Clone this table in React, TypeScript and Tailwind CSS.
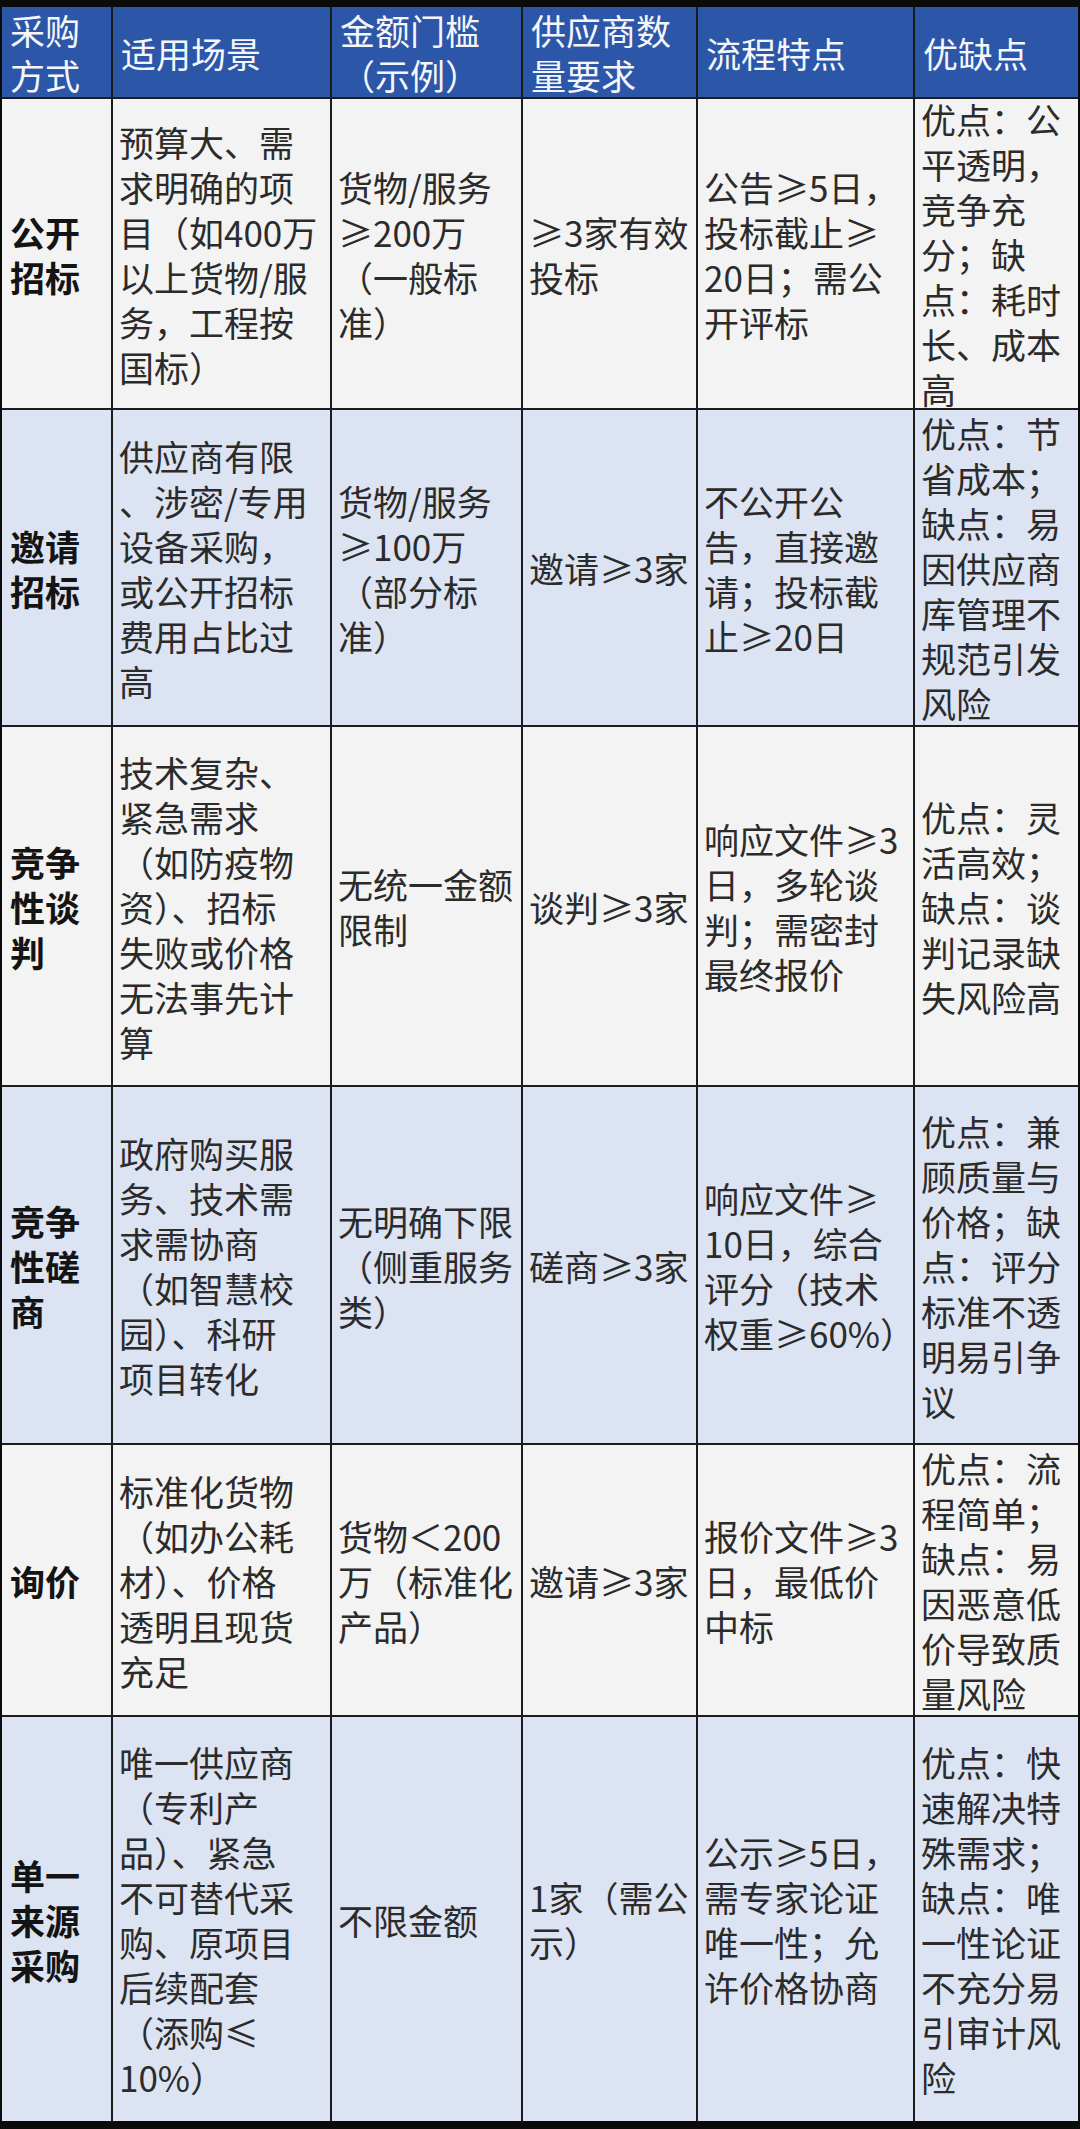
const headers = [['采购', '方式'], ['适用场景'], ['金额门槛', '（示例）'], ['供应商数', '量要求'], ['流程特点'], ['优缺点']];

const rows = [
  {
    h: 'h-[309px]',
    bg: 'bg-[#f3f3f3]',
    cells: [
      ['公开', '招标'],
      ['预算大、需', '求明确的项', '目（如400万', '以上货物/服', '务，工程按', '国标）'],
      ['货物/服务', '≥200万', '（一般标', '准）'],
      ['≥3家有效', '投标'],
      ['公告≥5日，', '投标截止≥', '20日；需公', '开评标'],
      ['优点：公', '平透明，', '竞争充', '分；缺', '点：耗时', '长、成本', '高']
    ]
  },
  {
    h: 'h-[315px]',
    bg: 'bg-[#dce3f2]',
    cells: [
      ['邀请', '招标'],
      ['供应商有限', '、涉密/专用', '设备采购，', '或公开招标', '费用占比过', '高'],
      ['货物/服务', '≥100万', '（部分标', '准）'],
      ['邀请≥3家'],
      ['不公开公', '告，直接邀', '请；投标截', '止≥20日'],
      ['优点：节', '省成本；', '缺点：易', '因供应商', '库管理不', '规范引发', '风险']
    ]
  },
  {
    h: 'h-[358px]',
    bg: 'bg-[#f3f3f3]',
    cells: [
      ['竞争', '性谈', '判'],
      ['技术复杂、', '紧急需求', '（如防疫物', '资）、招标', '失败或价格', '无法事先计', '算'],
      ['无统一金额', '限制'],
      ['谈判≥3家'],
      ['响应文件≥3', '日，多轮谈', '判；需密封', '最终报价'],
      ['优点：灵', '活高效；', '缺点：谈', '判记录缺', '失风险高']
    ]
  },
  {
    h: 'h-[356px]',
    bg: 'bg-[#dce3f2]',
    cells: [
      ['竞争', '性磋', '商'],
      ['政府购买服', '务、技术需', '求需协商', '（如智慧校', '园）、科研', '项目转化'],
      ['无明确下限', '（侧重服务', '类）'],
      ['磋商≥3家'],
      ['响应文件≥', '10日，综合', '评分（技术', '权重≥60%）'],
      ['优点：兼', '顾质量与', '价格；缺', '点：评分', '标准不透', '明易引争', '议']
    ]
  },
  {
    h: 'h-[270px]',
    bg: 'bg-[#f3f3f3]',
    cells: [
      ['询价'],
      ['标准化货物', '（如办公耗', '材）、价格', '透明且现货', '充足'],
      ['货物＜200', '万（标准化', '产品）'],
      ['邀请≥3家'],
      ['报价文件≥3', '日，最低价', '中标'],
      ['优点：流', '程简单；', '缺点：易', '因恶意低', '价导致质', '量风险']
    ]
  },
  {
    h: 'h-[404px]',
    bg: 'bg-[#dce3f2]',
    cells: [
      ['单一', '来源', '采购'],
      ['唯一供应商', '（专利产', '品）、紧急', '不可替代采', '购、原项目', '后续配套', '（添购≤', '10%）'],
      ['不限金额'],
      ['1家（需公', '示）'],
      ['公示≥5日，', '需专家论证', '唯一性；允', '许价格协商'],
      ['优点：快', '速解决特', '殊需求；', '缺点：唯', '一性论证', '不充分易', '引审计风', '险']
    ]
  }
];

// each cell is one text block; lines are kept as in the original picture
function Lines({ lines }: { lines: string[] }) {
  return <p className="whitespace-pre">{lines.join('\n')}</p>;
}

export default function App() {
  return (
    <div className="w-[1080px] h-[2129px] bg-[#0b0b0b] pt-[7px] px-[2px] font-['Noto_Sans_CJK_SC',sans-serif] text-[35px] leading-[45px]">
      <div className="grid grid-cols-[109px_217px_189px_173px_215px_163px] gap-[2px] bg-[#1c1c1c]">
        {/* header */}
        {headers.map((h, i) => (
          <div key={i} className="h-[90px] bg-[#2c56a8] text-[#f4f6fb] flex items-center pl-[8px]">
            <Lines lines={h} />
          </div>
        ))}

        {/* body */}
        {rows.map((row, r) =>
          row.cells.map((cell, c) => (
            <div
              key={r + '-' + c}
              className={`${row.h} ${row.bg} flex items-center ${c === 0 ? 'pl-[8px] font-bold text-[#141414]' : 'pl-[6px] text-[#2b2b2b]'}`}
            >
              <Lines lines={cell} />
            </div>
          ))
        )}
      </div>
    </div>
  );
}
